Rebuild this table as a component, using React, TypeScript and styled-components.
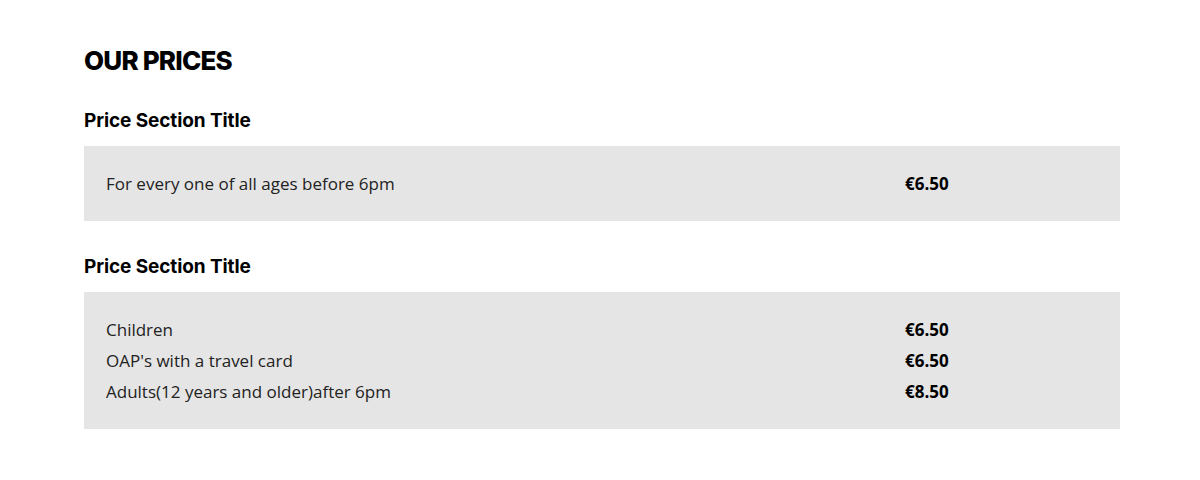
import styled, { createGlobalStyle } from 'styled-components';

type PriceRow = { label: string; price: string };
type PriceSection = { title: string; rows: PriceRow[] };

const sections: PriceSection[] = [
  {
    title: 'Price Section Title',
    rows: [{ label: 'For every one of all ages before 6pm', price: '€6.50' }],
  },
  {
    title: 'Price Section Title',
    rows: [
      { label: 'Children', price: '€6.50' },
      { label: "OAP's with a travel card", price: '€6.50' },
      { label: 'Adults(12 years and older)after 6pm', price: '€8.50' },
    ],
  },
];

const App = () => {
  return (
    <>
      <GlobalStyle />
      <Page>
        <Heading>OUR PRICES</Heading>
        {sections.map((section, sectionIndex) => (
          <Section key={`section-${sectionIndex}`}>
            <SectionTitle>{section.title}</SectionTitle>
            <PriceBox>
              {section.rows.map((row, rowIndex) => (
                <Row key={`row-${sectionIndex}-${rowIndex}`}>
                  <Label>{row.label}</Label>
                  <Price>{row.price}</Price>
                </Row>
              ))}
            </PriceBox>
          </Section>
        ))}
      </Page>
    </>
  );
};

export default App;

const GlobalStyle = createGlobalStyle`
  body {
    margin: 0;
    background: #fff;
  }
`;

const Page = styled('div')`
  width: 1036px;
  margin-left: 84px;
  padding-top: 44px;
  box-sizing: border-box;
`;

const Heading = styled('h1')`
  margin: 0 0 30px;
  font-family: Inter, 'DejaVu Sans', sans-serif;
  font-weight: 800;
  font-size: 26px;
  line-height: 34px;
  letter-spacing: -0.8px;
  color: #000;
`;

const Section = styled('div')`
  margin-bottom: 33px;
`;

const SectionTitle = styled('h2')`
  margin: 0 0 12px;
  font-family: Inter, 'DejaVu Sans', sans-serif;
  font-weight: 700;
  font-size: 19px;
  line-height: 26px;
  letter-spacing: -0.1px;
  color: #000;
`;

const PriceBox = styled('div')`
  background: #e5e5e5;
  padding: 22px;
`;

const Row = styled('div')`
  display: grid;
  grid-template-columns: 799px 1fr;
  line-height: 31px;
  font-family: 'Open Sans', sans-serif;
  font-size: 17px;
`;

const Label = styled('span')`
  color: #222;
`;

const Price = styled('span')`
  font-weight: 700;
  color: #000;
`;
